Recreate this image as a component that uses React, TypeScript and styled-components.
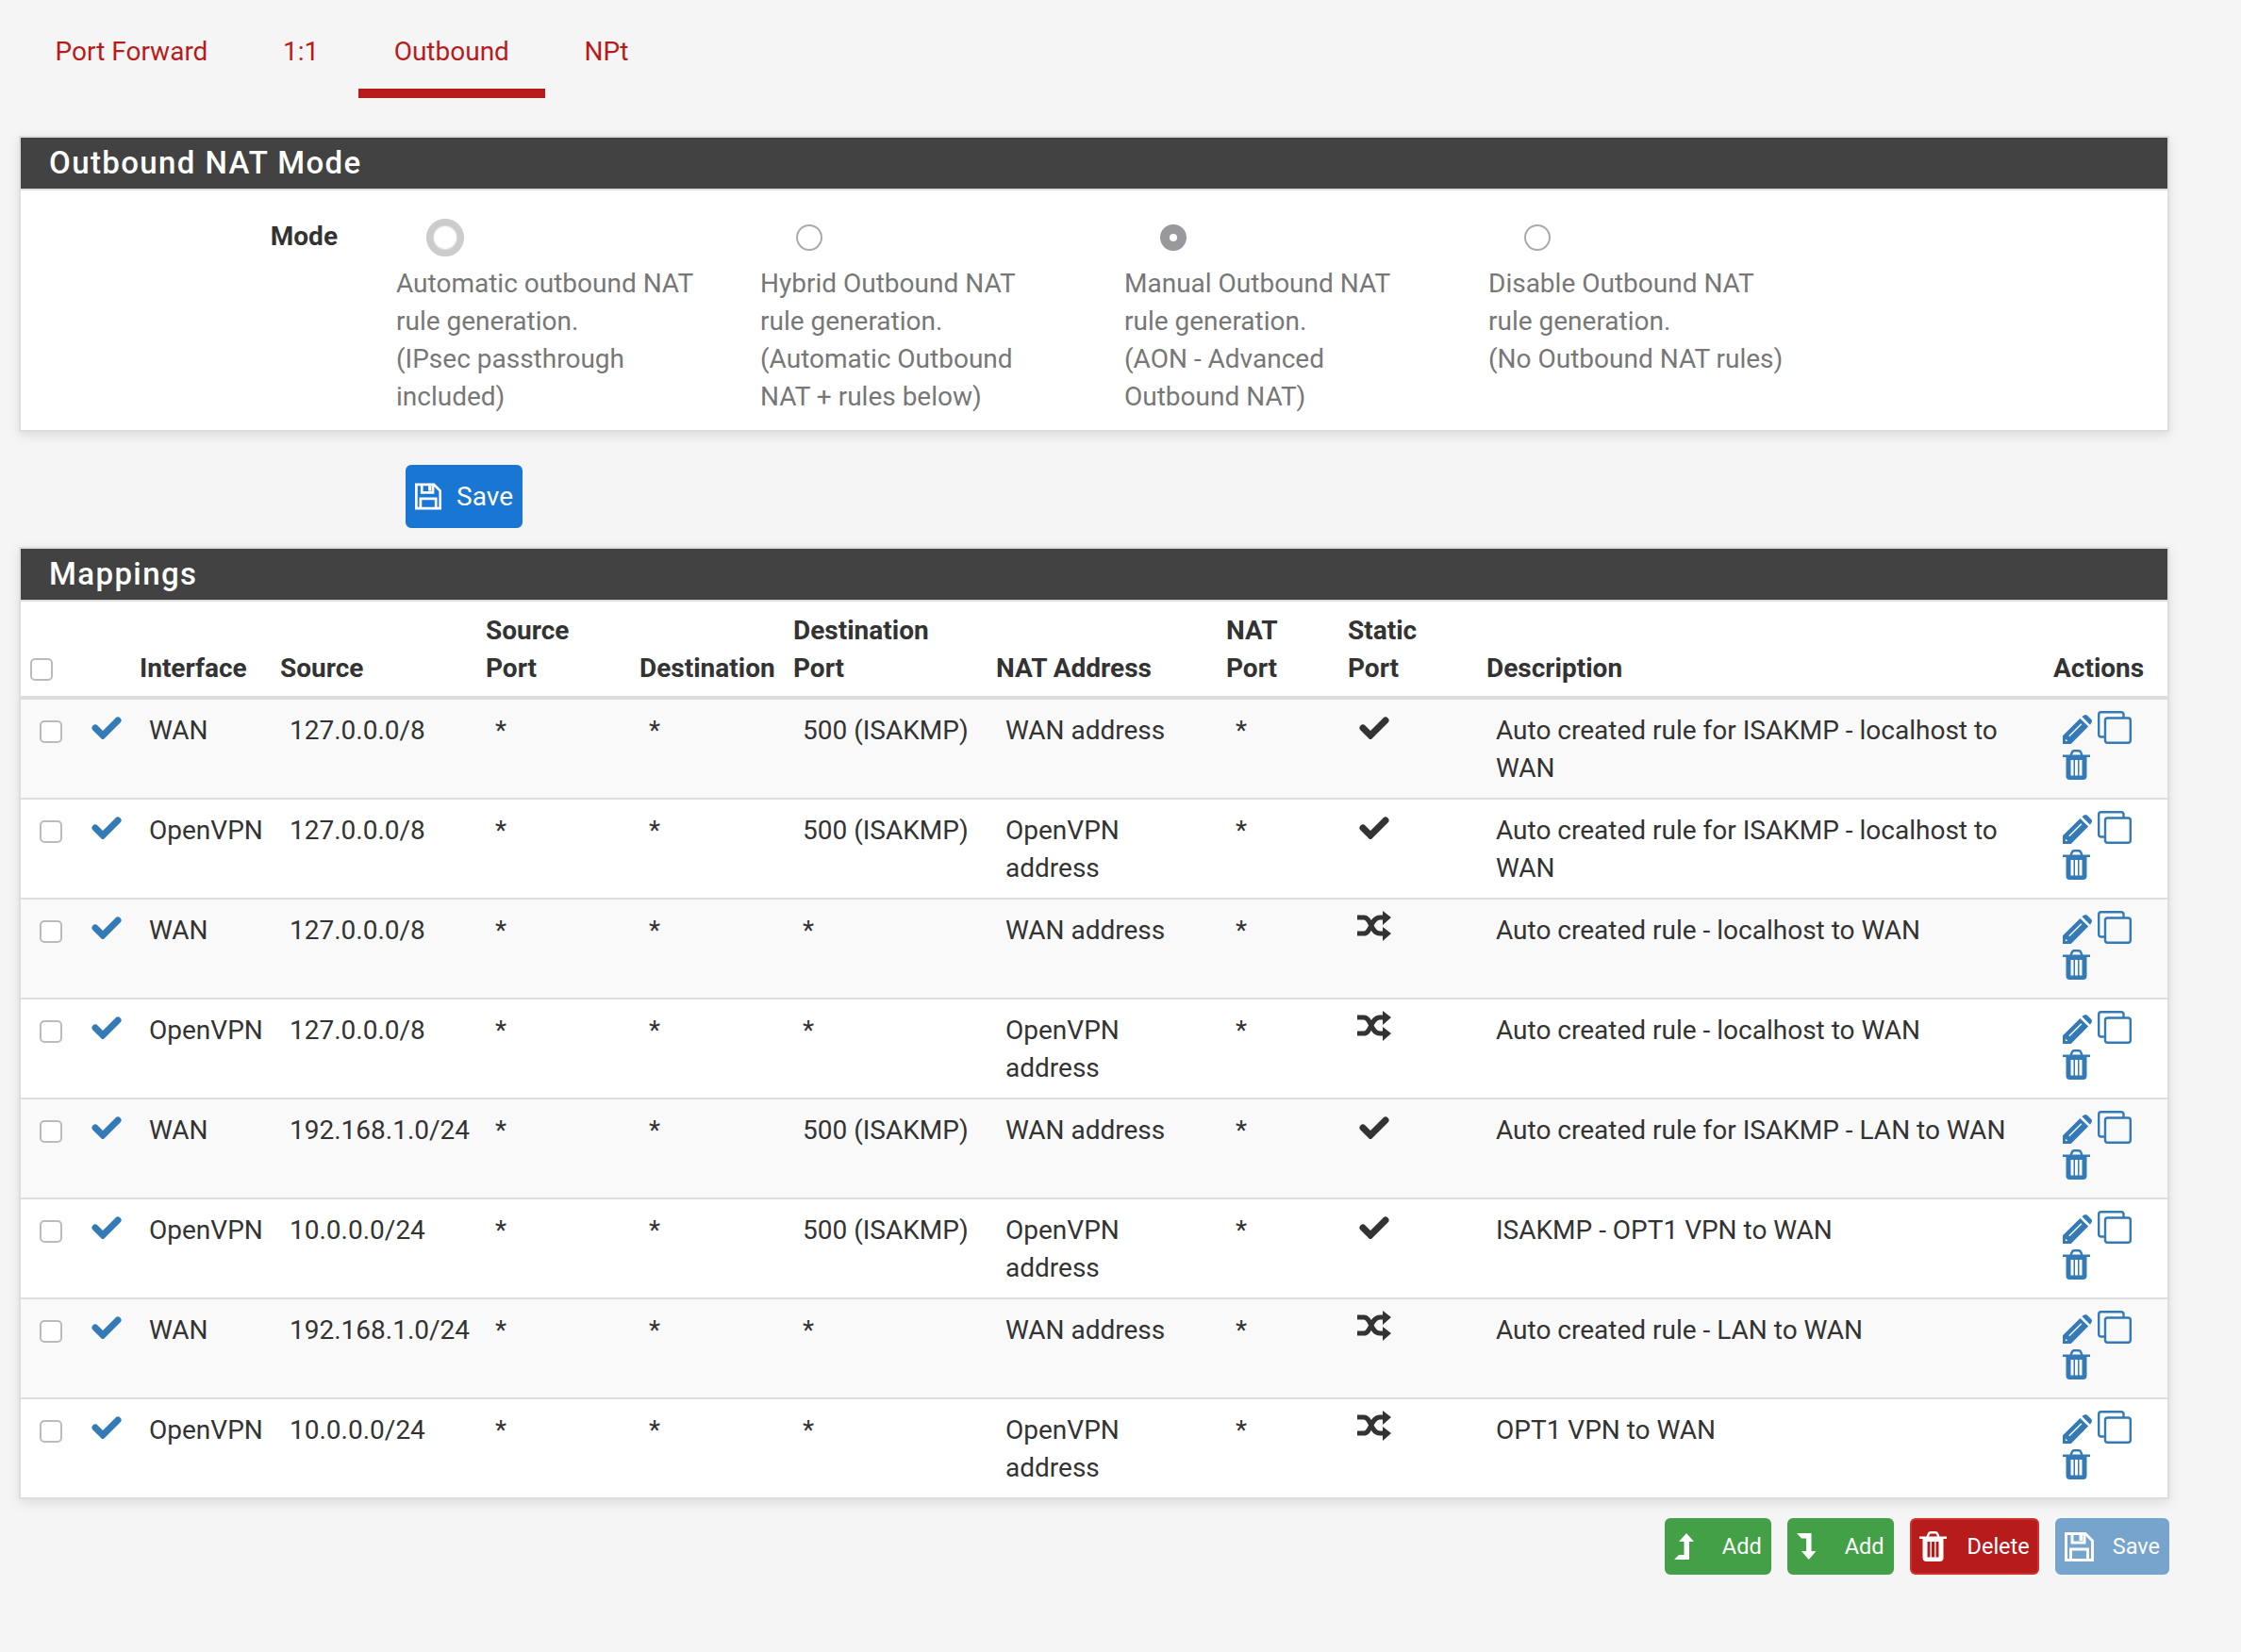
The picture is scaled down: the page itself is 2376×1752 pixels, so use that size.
import React from 'react';
import styled, { createGlobalStyle } from 'styled-components';

const GlobalStyle = createGlobalStyle`
  html, body {
    margin: 0;
    padding: 0;
    background: #f5f5f5;
    font-family: Roboto, "Liberation Sans", sans-serif;
    font-size: 28px;
    line-height: 40px;
    color: #333;
  }
  * { box-sizing: border-box; }
`;

const Page = styled.div`
  width: 2376px;
  height: 1752px;
  padding: 0 76px 0 20px;
  overflow: hidden;
`;

const Tabs = styled.ul`
  display: flex;
  gap: 3.5px;
  margin: 0 0 40px 0.5px;
  padding: 0;
  list-style: none;
`;

const Tab = styled.li<{ $active?: boolean }>`
  padding: 35px 38px 19px;
  color: #b71c1c;
  border-bottom: 10px solid ${(p) => (p.$active ? '#b71c1c' : 'transparent')};
`;

const Panel = styled.section`
  background: #fff;
  border: 2px solid #ddd;
  box-shadow: 0 4px 12px rgba(0, 0, 0, 0.1);
`;

const PanelHeading = styled.h2`
  margin: 0;
  height: 56px;
  padding: 0 30px;
  background: #424242;
  border-bottom: 2px solid #ddd;
  color: #fff;
  font-size: 33px;
  font-weight: 500;
  letter-spacing: 1.4px;
  line-height: 54px;
`;

const ModeBody = styled.div`
  display: flex;
  padding: 30px 0 15px;
`;

const ModeLabel = styled.div`
  width: 336px;
  margin-right: 62px;
  flex: none;
  text-align: right;
  font-weight: 700;
  line-height: 38px;
`;

const ModeOption = styled.div`
  width: 386px;
  flex: none;
`;

const RadioSlot = styled.div`
  width: 104px;
  height: 40px;
  margin-bottom: 9px;
  display: flex;
  align-items: center;
  justify-content: center;
`;

const Radio = styled.span<{ $state: 'focus' | 'off' | 'on' }>`
  display: block;
  border-radius: 50%;
  background: #fff;
  ${(p) =>
    p.$state === 'focus'
      ? 'width: 40px; height: 40px; border: 7px solid #ccc; box-shadow: inset 0 0 2px #888;'
      : p.$state === 'on'
        ? 'width: 28px; height: 28px; border: 10px solid #98989d;'
        : 'width: 28px; height: 28px; border: 2px solid #aaa;'}
`;

const ModeText = styled.div`
  color: #777;
  white-space: pre-line;
`;

const Button = styled.button<{ $color: string; $border?: string; $faded?: boolean }>`
  display: inline-flex;
  align-items: center;
  padding: 0 8px;
  border: 2px solid ${(p) => p.$border || p.$color};
  border-radius: 6px;
  background: ${(p) => p.$color};
  color: #fff;
  font: inherit;
  opacity: ${(p) => (p.$faded ? 0.65 : 1)};
`;

const SaveRow = styled.div`
  padding-left: 410px;
  margin: 35px 0 20px;
  height: 67px;
  line-height: 0;
`;

const PrimaryButton = styled(Button)`
  height: 67px;
  width: 124px;
  gap: 16px;
  font-size: 28px;
  line-height: 40px;
`;

const Table = styled.table`
  width: 2276px;
  table-layout: fixed;
  border-collapse: separate;
  border-spacing: 0;
`;

const Th = styled.th`
  height: 104px;
  padding: 11px 0 9px;
  border-bottom: 4px solid #ddd;
  text-align: left;
  vertical-align: bottom;
  font-weight: 700;
  white-space: pre-line;
`;

const Row = styled.tr<{ $odd: boolean }>`
  background: ${(p) => (p.$odd ? '#f9f9f9' : '#fff')};
  &:last-child td { border-bottom: 0; height: 104px; }
`;

const Td = styled.td`
  height: 106px;
  padding: 13px 0 0 10px;
  border-bottom: 2px solid #ddd;
  vertical-align: top;
  white-space: pre-line;
`;

const Check = styled.span<{ $head?: boolean }>`
  display: block;
  width: 24px;
  height: 24px;
  margin: ${(p) => (p.$head ? '0 0 7px 10px' : '9px 0 0 10px')};
  background: #fff;
  border: 2px solid #bbb;
  border-radius: 5px;
`;

const IconSlot = styled.span<{ $top: number; $left?: number }>`
  display: block;
  margin-top: ${(p) => p.$top}px;
  margin-left: ${(p) => p.$left || 0}px;
  line-height: 0;
`;

const Actions = styled.div`
  display: grid;
  grid-template-columns: 31px 36px;
  column-gap: 6px;
  row-gap: 6px;
  align-items: end;
  margin-top: -1px;
  color: #337ab7;
  line-height: 0;
`;

const Footer = styled.div`
  display: flex;
  justify-content: flex-end;
  gap: 17px;
  margin: 20px 0 0;
`;

const FooterButton = styled(Button)`
  height: 60px;
  font-size: 23.5px;
  line-height: 30px;
`;

const IconBox = styled.span`
  display: inline-flex;
  width: 31px;
  margin-right: 20px;
`;

const CheckIcon = ({ color }: { color: string }) => (
  <svg width="32" height="24" viewBox="0 0 32 24" style={{ color }}>
    <path d="M4 12 L12 20 L28 4" fill="none" stroke="currentColor" strokeWidth="7" strokeLinecap="round" strokeLinejoin="miter" />
  </svg>
);

const ShuffleIcon = () => (
  <svg width="36" height="32" viewBox="0 0 36 32" fill="#333">
    <path d="M0 7 H7 C15 7 14 24 24 24 H30 M0 24 H7 C15 24 14 7 24 7 H30" fill="none" stroke="#333" strokeWidth="5" />
    <path d="M27 0 L36 7 L27 15 Z M27 17 L36 24 L27 32 Z" />
  </svg>
);

const PencilIcon = () => (
  <svg width="31" height="31" viewBox="0 0 32 32" fill="currentColor">
    <path
      fillRule="evenodd"
      d="M0 32 V23 L19 4 L28 13 L9 32 Z M6.5 23 L7.5 24 L21 10.5 L20 9.5 Z M3 26.5 V29 H5.5 Z M21 2 L23.5 .5 Q25 -.5 26.5 .5 L31.5 5.5 Q32.5 7 31.5 8.5 L30 11 Z"
    />
  </svg>
);

const CloneIcon = () => (
  <svg width="36" height="35" viewBox="0 0 36 35" fill="none" stroke="currentColor" strokeWidth="2.4">
    <path d="M27.5 7 V3.5 Q27.5 1.2 25 1.2 H3.7 Q1.2 1.2 1.2 3.7 V25 Q1.2 27.5 3.7 27.5 H7.5" />
    <rect x="8" y="7.5" width="26.8" height="26.3" rx="2.5" />
  </svg>
);

const TrashIcon = () => (
  <svg width="29" height="32" viewBox="0 0 29 32" fill="currentColor">
    <path
      fillRule="evenodd"
      d="M0 5.5 H29 V8 H25.5 V28 Q25.5 32 21.5 32 H7.5 Q3.5 32 3.5 28 V8 H0 Z M8.5 11 V27.5 H11.5 V11 Z M13 11 V27.5 H16 V11 Z M17.5 11 V27.5 H20.5 V11 Z"
    />
    <path d="M8.5 6 L10 2.5 Q10.5 1.2 12 1.2 H17 Q18.5 1.2 19 2.5 L20.5 6" fill="none" stroke="currentColor" strokeWidth="2.4" />
  </svg>
);

const SaveIcon = () => (
  <svg width="31" height="31" viewBox="0 0 31 31" fill="none" stroke="currentColor" strokeWidth="3">
    <path d="M1.5 1.5 H22 L29.5 9 V29.5 H1.5 Z" />
    <path d="M8 1.5 V11 H21 V1.5 M6.5 29.5 V18 H24.5 V29.5" />
    <path d="M15.5 3 H19 V9 H15.5 Z" fill="currentColor" stroke="none" />
  </svg>
);

const LevelUpIcon = () => (
  <svg width="21" height="28" viewBox="0 0 21 28" fill="currentColor">
    <path d="M13 0 L21 9 H16 V28 H0 L5 23 H10.5 V9 H5 Z" />
  </svg>
);

const LevelDownIcon = () => (
  <svg width="21" height="28" viewBox="0 0 21 28" fill="currentColor">
    <path d="M0 0 H15.5 V19 H20.5 L12.7 28 L5 19 H10 V5.5 H5 Z" />
  </svg>
);

const columns = [
  { w: 66, label: '' },
  { w: 60, label: '' },
  { w: 149, label: 'Interface' },
  { w: 218, label: 'Source' },
  { w: 163, label: 'Source\nPort' },
  { w: 163, label: 'Destination' },
  { w: 215, label: 'Destination\nPort' },
  { w: 244, label: 'NAT Address' },
  { w: 129, label: 'NAT\nPort' },
  { w: 147, label: 'Static\nPort' },
  { w: 601, label: 'Description' },
  { w: 121, label: 'Actions' },
];

const rows = [
  ['WAN', '127.0.0.0/8', '500 (ISAKMP)', 'WAN address', true, 'Auto created rule for ISAKMP - localhost to\nWAN'],
  ['OpenVPN', '127.0.0.0/8', '500 (ISAKMP)', 'OpenVPN\naddress', true, 'Auto created rule for ISAKMP - localhost to\nWAN'],
  ['WAN', '127.0.0.0/8', '*', 'WAN address', false, 'Auto created rule - localhost to WAN'],
  ['OpenVPN', '127.0.0.0/8', '*', 'OpenVPN\naddress', false, 'Auto created rule - localhost to WAN'],
  ['WAN', '192.168.1.0/24', '500 (ISAKMP)', 'WAN address', true, 'Auto created rule for ISAKMP - LAN to WAN'],
  ['OpenVPN', '10.0.0.0/24', '500 (ISAKMP)', 'OpenVPN\naddress', true, 'ISAKMP - OPT1 VPN to WAN'],
  ['WAN', '192.168.1.0/24', '*', 'WAN address', false, 'Auto created rule - LAN to WAN'],
  ['OpenVPN', '10.0.0.0/24', '*', 'OpenVPN\naddress', false, 'OPT1 VPN to WAN'],
] as const;

const modes = [
  { state: 'focus', text: 'Automatic outbound NAT\nrule generation.\n(IPsec passthrough\nincluded)' },
  { state: 'off', text: 'Hybrid Outbound NAT\nrule generation.\n(Automatic Outbound\nNAT + rules below)' },
  { state: 'on', text: 'Manual Outbound NAT\nrule generation.\n(AON - Advanced\nOutbound NAT)' },
  { state: 'off', text: 'Disable Outbound NAT\nrule generation.\n(No Outbound NAT rules)' },
] as const;

export default function App() {
  return (
    <Page>
      <GlobalStyle />
      <Tabs>
        <Tab>Port Forward</Tab>
        <Tab>1:1</Tab>
        <Tab $active>Outbound</Tab>
        <Tab>NPt</Tab>
      </Tabs>

      <Panel>
        <PanelHeading>Outbound NAT Mode</PanelHeading>
        <ModeBody>
          <ModeLabel>Mode</ModeLabel>
          {modes.map((m) => (
            <ModeOption key={m.text}>
              <RadioSlot>
                <Radio $state={m.state} />
              </RadioSlot>
              <ModeText>{m.text}</ModeText>
            </ModeOption>
          ))}
        </ModeBody>
      </Panel>

      <SaveRow>
        <PrimaryButton $color="#1976d2">
          <SaveIcon />
          Save
        </PrimaryButton>
      </SaveRow>

      <Panel>
        <PanelHeading>Mappings</PanelHeading>
        <Table>
          <colgroup>
            {columns.map((c, i) => (
              <col key={i} width={c.w} />
            ))}
          </colgroup>
          <thead>
            <tr>
              {columns.map((c, i) => (
                <Th key={i}>{i === 0 ? <Check $head /> : c.label}</Th>
              ))}
            </tr>
          </thead>
          <tbody>
            {rows.map((r, i) => (
              <Row key={i} $odd={i % 2 === 0}>
                <Td>
                  <Check />
                </Td>
                <Td>
                  <IconSlot $top={5} $left={-1}>
                    <CheckIcon color="#337ab7" />
                  </IconSlot>
                </Td>
                <Td>{r[0]}</Td>
                <Td>{r[1]}</Td>
                <Td>*</Td>
                <Td>*</Td>
                <Td>{r[2]}</Td>
                <Td>{r[3]}</Td>
                <Td>*</Td>
                <Td>
                  {r[4] ? (
                    <IconSlot $top={5} $left={2}>
                      <CheckIcon color="#333" />
                    </IconSlot>
                  ) : (
                    <IconSlot $top={-1}>
                      <ShuffleIcon />
                    </IconSlot>
                  )}
                </Td>
                <Td>{r[5]}</Td>
                <Td>
                  <Actions>
                    <PencilIcon />
                    <CloneIcon />
                    <TrashIcon />
                  </Actions>
                </Td>
              </Row>
            ))}
          </tbody>
        </Table>
      </Panel>

      <Footer>
        <FooterButton $color="#43a047">
          <IconBox><LevelUpIcon /></IconBox>
          Add
        </FooterButton>
        <FooterButton $color="#43a047">
          <IconBox><LevelDownIcon /></IconBox>
          Add
        </FooterButton>
        <FooterButton $color="#b71c1c" $border="#d32f2f">
          <IconBox><TrashIcon /></IconBox>
          Delete
        </FooterButton>
        <FooterButton $color="#337ab7" $faded>
          <IconBox><SaveIcon /></IconBox>
          Save
        </FooterButton>
      </Footer>
    </Page>
  );
}
